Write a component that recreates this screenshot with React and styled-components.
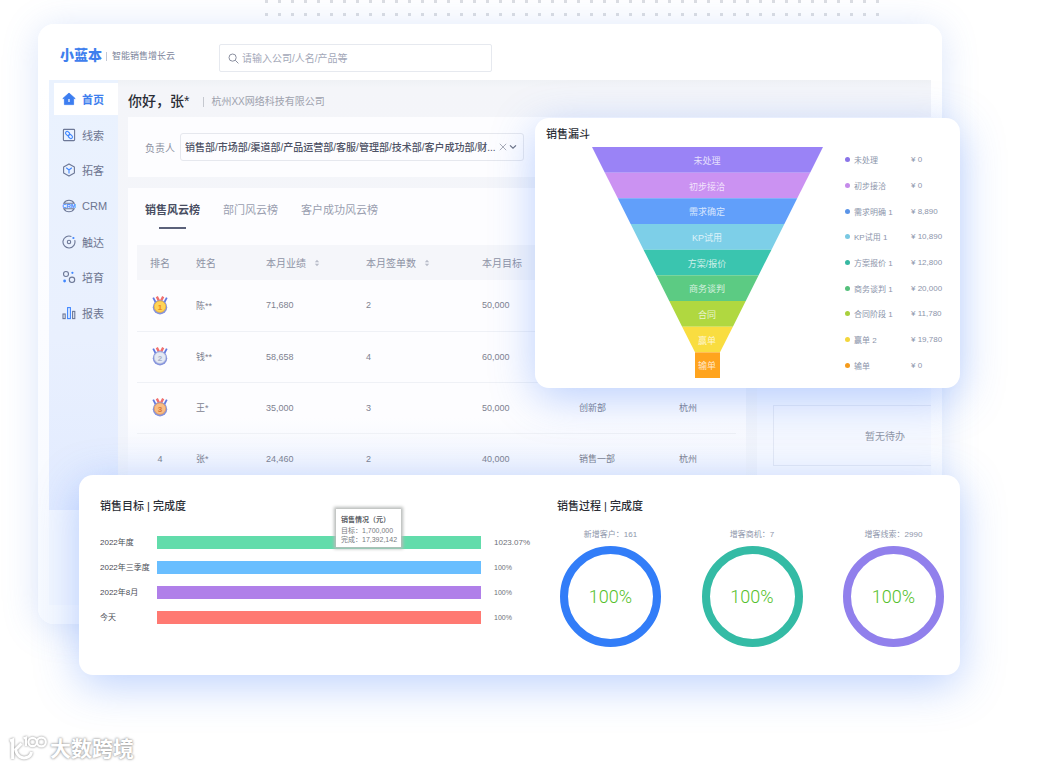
import React from 'react'
import styled, { createGlobalStyle } from 'styled-components'

const navItems = [
    { name: '首页', icon: 'home' },
    { name: '线索', icon: 'clue' },
    { name: '拓客', icon: 'expand' },
    { name: 'CRM', icon: 'crm' },
    { name: '触达', icon: 'reach' },
    { name: '培育', icon: 'nurture' },
    { name: '报表', icon: 'report' },
]

const rows = [
    { rank: 1, name: '陈**', amount: '71,680', orders: 2, target: '50,000', dept: '', city: '' },
    { rank: 2, name: '钱**', amount: '58,658', orders: 4, target: '60,000', dept: '', city: '' },
    { rank: 3, name: '王*', amount: '35,000', orders: 3, target: '50,000', dept: '创新部', city: '杭州' },
    { rank: 4, name: '张*', amount: '24,460', orders: 2, target: '40,000', dept: '销售一部', city: '杭州' },
]

const stages = [
    { label: '未处理', legend: '未处理', value: '¥ 0', color: '#9a83f6', dot: '#8a74e8' },
    { label: '初步接洽', legend: '初步接洽', value: '¥ 0', color: '#cb92f2', dot: '#c58bea' },
    { label: '需求确定', legend: '需求明确 1', value: '¥ 8,890', color: '#619ffa', dot: '#5a94e8' },
    { label: 'KP试用', legend: 'KP试用 1', value: '¥ 10,890', color: '#7dcfe8', dot: '#79c8e2' },
    { label: '方案/报价', legend: '方案报价 1', value: '¥ 12,800', color: '#3ac5af', dot: '#36b8a2' },
    { label: '商务谈判', legend: '商务谈判 1', value: '¥ 20,000', color: '#5ccb83', dot: '#55c07b' },
    { label: '合同', legend: '合同阶段 1', value: '¥ 11,780', color: '#b0d840', dot: '#a9d03c' },
    { label: '赢单', legend: '赢单 2', value: '¥ 19,780', color: '#f9dd40', dot: '#f3d63c' },
    { label: '输单', legend: '输单', value: '¥ 0', color: '#ffa41e', dot: '#f59b1c' },
]

const goals = [
    { label: '2022年度', percent: '1023.07%', color: '#62dcab', big: true },
    { label: '2022年三季度', percent: '100%', color: '#69beff' },
    { label: '2022年8月', percent: '100%', color: '#b07fe9' },
    { label: '今天', percent: '100%', color: '#ff7972' },
]

const rings = [
    { label: '新增客户：161', color: '#327df8' },
    { label: '增客商机：7', color: '#34bba5' },
    { label: '增客线索：2990', color: '#9180ec' },
]

const medals = {
    1: { face: '#ffd457', edge: '#f3b52f', text: '#f08a1c' },
    2: { face: '#e4e9f4', edge: '#c5cde0', text: '#a9b1c6' },
    3: { face: '#f9bd84', edge: '#e99c5d', text: '#d9793a' },
}

function NavIcon({ name }) {
    const grey = '#6d7897'
    const blue = '#3f86ff'
    return (
        <svg width="14" height="14" viewBox="0 0 14 14" fill="none" stroke={grey} strokeWidth="1.1" aria-hidden="true">
            {name === 'home' && (
                <>
                    <path d="M7 1 L13.2 6.6 H11.6 V12.6 H2.4 V6.6 H0.8 Z" fill="#3c7df0" stroke="#3c7df0" strokeWidth="0.8" strokeLinejoin="round" />
                    <path d="M7 7 V10" stroke="#fff" strokeWidth="1.2" />
                </>
            )}
            {name === 'clue' && (
                <>
                    <rect x="1.4" y="1.4" width="11.2" height="11.2" rx="0.8" />
                    <rect x="3.4" y="3.8" width="4.4" height="3.2" rx="1.5" transform="rotate(45 5.6 5.4)" stroke={blue} />
                    <rect x="6.2" y="7" width="4.4" height="3.2" rx="1.5" transform="rotate(45 8.4 8.6)" stroke={blue} />
                </>
            )}
            {name === 'expand' && (
                <>
                    <path d="M7 0.9 L12.4 4 V10 L7 13.1 L1.6 10 V4 Z" strokeLinejoin="round" />
                    <path d="M4.2 4.8 L7 7 L9.8 4.8 M7 7 V10.4" stroke={blue} />
                </>
            )}
            {name === 'crm' && (
                <>
                    <path d="M1.8 4.2 A6 6 0 0 1 12.2 4.2 Z M1.8 9.8 A6 6 0 0 0 12.2 9.8 Z" />
                    <text x="7" y="9" textAnchor="middle" fontSize="6" fontWeight="700" fill={blue} stroke="none">CRM</text>
                </>
            )}
            {name === 'reach' && (
                <>
                    <path d="M9.4 1.5 A6 6 0 1 0 12.7 5.2" />
                    <circle cx="7" cy="7" r="1.7" />
                    <circle cx="11.4" cy="3" r="1.1" fill={blue} stroke="none" />
                </>
            )}
            {name === 'nurture' && (
                <>
                    <circle cx="4" cy="4" r="2.5" />
                    <circle cx="10" cy="9.8" r="2.7" />
                    <circle cx="10.4" cy="2.8" r="1.1" fill={blue} stroke="none" />
                    <circle cx="2.6" cy="11" r="1.4" fill={blue} stroke="none" />
                </>
            )}
            {name === 'report' && (
                <>
                    <rect x="1" y="8" width="2.2" height="4.6" />
                    <rect x="5.6" y="1.6" width="2.8" height="11" stroke={blue} />
                    <rect x="10.6" y="5.4" width="2.2" height="7.2" />
                </>
            )}
        </svg>
    )
}

function Medal({ rank }) {
    const m = medals[rank]
    return (
        <svg width="16" height="19" viewBox="0 0 16 19" role="img" aria-label={`${rank}`}>
            <path d="M1.2 1.6 L4 7" stroke="#5f78e0" strokeWidth="1.8" />
            <path d="M14.8 1.6 L12 7" stroke="#5f78e0" strokeWidth="1.8" />
            <path d="M4.8 0.6 L7.4 5.6 M11.2 0.6 L8.6 5.6" stroke="#f0706e" strokeWidth="2.4" />
            <circle cx="8" cy="11.2" r="7.2" fill="#8593dc" />
            <circle cx="8" cy="10.6" r="5.7" fill={m.face} stroke={m.edge} strokeWidth="0.8" />
            <text x="8" y="13.6" textAnchor="middle" fontSize="8" fontWeight="700" fill={m.text}>{rank}</text>
        </svg>
    )
}

function SortIcon() {
    return (
        <svg width="6" height="8" viewBox="0 0 6 8" fill="#b9bdc9" aria-hidden="true">
            <path d="M3 0.8 L5.2 3.2 H0.8 Z M3 7.2 L5.2 4.8 H0.8 Z" />
        </svg>
    )
}

function Funnel() {
    const band = 231 / 9
    const edge = (i) => (Math.min(i, 8) * 103) / 8
    return (
        <svg width="231" height="231" viewBox="0 0 231 231">
            {stages.map((s, i) => {
                const top = edge(i)
                const bottom = edge(i + 1)
                const y = i * band
                return (
                    <g key={s.label}>
                        <polygon
                            points={`${top},${y} ${231 - top},${y} ${231 - bottom},${y + band} ${bottom},${y + band}`}
                            fill={s.color}
                        />
                        <text x="115" y={y + 17} textAnchor="middle" fontSize="9" fill="#fff" fillOpacity="0.75">{s.label}</text>
                    </g>
                )
            })}
        </svg>
    )
}

function App() {
    return (
        <Stage>
            <GlobalStyle />
            <Dots />
            <Window>
                <Header>
                    <Logo>小蓝本</Logo>
                    <Slogan>智能销售增长云</Slogan>
                    <Search>
                        <svg width="11" height="11" viewBox="0 0 11 11" fill="none" stroke="#8b90a0" aria-hidden="true">
                            <circle cx="4.6" cy="4.6" r="3.6" />
                            <path d="M7.3 7.3 L10.4 10.4" />
                        </svg>
                        <input type="search" aria-label="搜索" placeholder="请输入公司/人名/产品等" />
                    </Search>
                </Header>
                <Body>
                    <Sidebar>
                        {navItems.map((item, i) => (
                            <NavLink href="#" key={item.name} $active={i === 0}>
                                <NavIcon name={item.icon} />
                                {item.name}
                            </NavLink>
                        ))}
                    </Sidebar>
                    <Main>
                        <Greeting>
                            <h1>你好，张*</h1>
                            <p>杭州XX网络科技有限公司</p>
                        </Greeting>
                        <FilterPanel>
                            <label htmlFor="owner">负责人</label>
                            <SelectBox>
                                <select id="owner">
                                    <option>销售部/市场部/渠道部/产品运营部/客服/管理部/技术部/客户成功部/财...</option>
                                </select>
                                <button type="button" aria-label="清除">
                                    <svg width="8" height="8" viewBox="0 0 8 8" stroke="#a9adb8" aria-hidden="true">
                                        <path d="M0.8 0.8 L7.2 7.2 M7.2 0.8 L0.8 7.2" />
                                    </svg>
                                </button>
                                <svg width="8" height="6" viewBox="0 0 8 6" fill="none" stroke="#6b7183" strokeWidth="1.2" aria-hidden="true">
                                    <path d="M1 1.4 L4 4.2 L7 1.4" />
                                </svg>
                            </SelectBox>
                        </FilterPanel>
                        <Columns>
                            <RankPanel>
                                <Tabs>
                                    <Tab type="button" $active>销售风云榜</Tab>
                                    <Tab type="button">部门风云榜</Tab>
                                    <Tab type="button">客户成功风云榜</Tab>
                                </Tabs>
                                <RankTable>
                                    <colgroup>
                                        <col width="46" />
                                        <col width="70" />
                                        <col width="100" />
                                        <col width="116" />
                                        <col width="97" />
                                        <col width="100" />
                                        <col />
                                    </colgroup>
                                    <thead>
                                        <tr>
                                            <th>排名</th>
                                            <th>姓名</th>
                                            <th><Sort type="button">本月业绩<SortIcon /></Sort></th>
                                            <th><Sort type="button">本月签单数<SortIcon /></Sort></th>
                                            <th>本月目标</th>
                                            <td />
                                            <td />
                                        </tr>
                                    </thead>
                                    <tbody>
                                        {rows.map((r) => (
                                            <tr key={r.rank}>
                                                <td>{medals[r.rank] ? <Medal rank={r.rank} /> : r.rank}</td>
                                                <td>{r.name}</td>
                                                <td>{r.amount}</td>
                                                <td>{r.orders}</td>
                                                <td>{r.target}</td>
                                                <td>{r.dept}</td>
                                                <td>{r.city}</td>
                                            </tr>
                                        ))}
                                    </tbody>
                                </RankTable>
                            </RankPanel>
                            <TodoPanel>
                                <Todo>暂无待办</Todo>
                            </TodoPanel>
                        </Columns>
                    </Main>
                </Body>
            </Window>

            <FunnelCard>
                <CardTitle>销售漏斗</CardTitle>
                <FunnelBody>
                    <Funnel />
                    <Legend>
                        {stages.map((s) => (
                            <LegendItem key={s.label} $color={s.dot}>
                                <span>{s.legend}</span>
                                <b>{s.value}</b>
                            </LegendItem>
                        ))}
                    </Legend>
                </FunnelBody>
            </FunnelCard>

            <ReportCard>
                <Goals>
                    <CardTitle>销售目标 | 完成度</CardTitle>
                    <GoalList>
                        {goals.map((g) => (
                            <GoalRow key={g.label} $big={g.big}>
                                <span>{g.label}</span>
                                <Bar $color={g.color}>
                                    {g.big && (
                                        <Tooltip>
                                            <strong>销售情况（元）</strong>
                                            <p>目标：1,700,000</p>
                                            <p>完成：17,392,142</p>
                                        </Tooltip>
                                    )}
                                </Bar>
                                <em>{g.percent}</em>
                            </GoalRow>
                        ))}
                    </GoalList>
                </Goals>
                <Process>
                    <CardTitle>销售过程 | 完成度</CardTitle>
                    <Rings>
                        {rings.map((r) => (
                            <RingItem key={r.label}>
                                <p>{r.label}</p>
                                <Ring $color={r.color}>100%</Ring>
                            </RingItem>
                        ))}
                    </Rings>
                </Process>
            </ReportCard>

            <Watermark>
                <svg width="39" height="28" viewBox="0 0 39 28" fill="none" stroke="#fff" strokeWidth="3" aria-hidden="true">
                    <path d="M1 6 L3.6 5 V24" />
                    <path d="M12.5 8.5 L6.6 14.4 C7.6 21 12.6 24 17.6 22.5 C20.4 21.6 22 20 22.5 17" />
                    <path d="M14.5 3.4 L17 2.6 V11" strokeWidth="2.2" />
                    <circle cx="23.6" cy="7" r="4.2" strokeWidth="2.2" />
                    <circle cx="32.4" cy="7" r="4.4" strokeWidth="2.2" />
                </svg>
                大数跨境
            </Watermark>
        </Stage>
    )
}

export default App

const GlobalStyle = createGlobalStyle`
    *{
        box-sizing: border-box;
    }
    body{
        margin: 0;
        background: #fff;
        font-family: "Liberation Sans", "Noto Sans CJK SC", sans-serif;
    }
    h1, h2, p{
        margin: 0;
    }
    button, input, select{
        font: inherit;
        color: inherit;
        border: none;
        background: none;
        padding: 0;
        outline: none;
    }
    button{
        cursor: pointer;
    }
`

const Stage = styled.div`
    position: relative;
    overflow: hidden;
    padding-bottom: 4px;
`

const Dots = styled.div`
    height: 16px;
    margin: 0 160px 0 265px;
    background: conic-gradient(at 3px 3px, transparent 75%, #dcdee2 0) 0 0 / 13px 13px;
`

const Window = styled.div`
    margin: 8px 97px 0 38px;
    padding: 0 11px 19px;
    border-radius: 16px;
    background: linear-gradient(#fff 60px, #fbfcff 300px, #f7faff);
    box-shadow: 0 4px 36px rgba(80, 130, 230, 0.22);
`

const Header = styled.header`
    display: flex;
    align-items: center;
    height: 56px;
    padding: 8px 11px 0;
`

const Logo = styled.strong`
    font-size: 14px;
    font-weight: 900;
    line-height: 14px;
    padding-bottom: 2px;
    color: #3f80ee;
`

const Slogan = styled.span`
    margin-left: 4px;
    padding-left: 5px;
    border-left: 1px solid #c3c8d4;
    font-size: 9px;
    line-height: 9px;
    color: #7d859c;
`

const Search = styled.label`
    display: flex;
    align-items: center;
    gap: 3px;
    width: 273px;
    height: 28px;
    margin: 4px 0 0 44px;
    padding: 0 8px;
    border: 1px solid #e6e9ef;
    border-radius: 2px;
    font-size: 10px;
    input{
        flex: 1;
    }
    input::placeholder{
        color: #a3a8b8;
    }
`

const Body = styled.div`
    display: flex;
    align-items: flex-start;
    min-height: 525px;
    background: #f3f7ff;
`

const Sidebar = styled.nav`
    display: flex;
    flex-direction: column;
    justify-content: space-between;
    width: 69px;
    min-height: 430px;
    padding: 3px 0 181px 5px;
    background: linear-gradient(#eaf2fe, #e9f0fe 60%, #e2ebff);
`

const NavLink = styled.a`
    display: flex;
    align-items: center;
    gap: 6px;
    height: 32px;
    padding-left: 8px;
    font-size: 11px;
    font-weight: ${(p) => (p.$active ? 700 : 400)};
    color: ${(p) => (p.$active ? '#3f80ee' : '#6d7590')};
    background: ${(p) => (p.$active ? '#fff' : 'transparent')};
    text-decoration: none;
`

const Main = styled.main`
    flex: 1;
    align-self: stretch;
    display: flex;
    flex-direction: column;
    min-width: 0;
    padding-left: 10px;
    background: linear-gradient(#eff1f5, #f4f5f9 8px, #f4f6fb 60%, #e6edfc);
`

const Greeting = styled.div`
    display: flex;
    align-items: center;
    gap: 14px;
    height: 37px;
    padding-top: 7px;
    h1{
        font-size: 14px;
        font-weight: 500;
        line-height: 18px;
        padding-bottom: 2px;
        color: #2a2d36;
    }
    p{
        padding-left: 7px;
        border-left: 1px solid #c5c8cf;
        font-size: 10px;
        line-height: 10px;
        color: #9ea2ae;
    }
`

const FilterPanel = styled.section`
    display: flex;
    align-items: center;
    gap: 5px;
    height: 60px;
    padding-left: 17px;
    background: #fdfdff;
    font-size: 10px;
    color: #8d92a2;
`

const SelectBox = styled.div`
    display: flex;
    align-items: center;
    gap: 2px;
    width: 344px;
    height: 28px;
    padding: 0 6px 0 4px;
    border: 1px solid #e6e8ee;
    border-radius: 3px;
    color: #4d5265;
    select{
        flex: 1;
        min-width: 0;
        appearance: none;
        font-weight: 500;
    }
    button{
        display: flex;
    }
`

const Columns = styled.div`
    flex: 1;
    display: flex;
    gap: 11px;
    margin-top: 11px;
`

const RankPanel = styled.section`
    flex: 1;
    padding: 0 10px 0 9px;
    background: linear-gradient(#fdfdff 230px, #f0f4fe 285px);
`

const Tabs = styled.div`
    display: flex;
    gap: 23px;
    height: 57px;
    padding: 9px 0 0 8px;
`

const Tab = styled.button`
    position: relative;
    height: 23px;
    font-size: 11px;
    font-weight: ${(p) => (p.$active ? 700 : 400)};
    color: ${(p) => (p.$active ? '#484d62' : '#9a9fb0')};
    &::after{
        content: '';
        display: ${(p) => (p.$active ? 'block' : 'none')};
        position: absolute;
        left: 14px;
        right: 14px;
        bottom: -9px;
        height: 2px;
        background: #5b617a;
    }
`

const RankTable = styled.table`
    width: 100%;
    table-layout: fixed;
    border-collapse: collapse;
    font-size: 9px;
    color: #7e8290;
    th, td{
        padding: 0 0 0 13px;
        text-align: left;
        vertical-align: middle;
    }
    thead tr{
        height: 35px;
        background: #f5f6fa;
    }
    th{
        font-size: 10px;
        font-weight: 400;
        color: #8e93a5;
    }
    th:first-child, td:first-child{
        padding: 0;
        text-align: center;
    }
    tbody td{
        height: 51px;
        border-bottom: 1px solid #eff1f6;
    }
    td svg{
        display: block;
        margin: 0 auto;
    }
`

const Sort = styled.button`
    display: flex;
    align-items: center;
    gap: 8px;
`

const TodoPanel = styled.section`
    width: 174px;
    padding: 217px 0 0 16px;
    overflow: hidden;
    background: #f5f8ff;
`

const Todo = styled.div`
    display: flex;
    align-items: center;
    justify-content: center;
    width: 224px;
    height: 61px;
    border: 1px solid #e3e8f4;
    font-size: 10px;
    color: #9096a6;
`

const Card = styled.section`
    background: #fff;
    border-radius: 14px;
    box-shadow: 0 10px 44px rgba(60, 120, 250, 0.34);
`

const CardTitle = styled.h2`
    font-size: 11px;
    font-weight: 500;
    line-height: 16px;
    color: #2b2e36;
`

const FunnelCard = styled(Card)`
    position: absolute;
    top: 118px;
    left: 535px;
    right: 79px;
    padding: 8px 11px 10px;
`

const FunnelBody = styled.div`
    display: flex;
    gap: 22px;
    margin-top: 5px;
    padding-left: 46px;
`

const Legend = styled.ul`
    flex: 1;
    display: grid;
    grid-template-rows: repeat(9, 1fr);
    margin: 0;
    padding: 0;
    list-style: none;
`

const LegendItem = styled.li`
    display: grid;
    grid-template-columns: 9px 57px 1fr;
    align-items: center;
    font-size: 8px;
    color: #8c95ab;
    white-space: nowrap;
    &::before{
        content: '';
        width: 5px;
        height: 5px;
        border-radius: 50%;
        background: ${(p) => p.$color};
    }
    b{
        font-weight: 400;
    }
`

const ReportCard = styled(Card)`
    position: relative;
    display: flex;
    min-height: 200px;
    margin: -149px 79px 0;
    padding: 23px 16px 28px 21px;
`

const Goals = styled.div`
    flex: 1;
`

const GoalList = styled.div`
    display: grid;
    gap: 12px;
    margin-top: 22px;
`

const GoalRow = styled.div`
    display: grid;
    grid-template-columns: 57px 1fr 50px;
    align-items: center;
    height: 13px;
    font-size: 8px;
    line-height: 12px;
    color: #4a4d55;
    em{
        font-size: ${(p) => (p.$big ? 8 : 7)}px;
        font-style: normal;
        color: #6d7078;
    }
`

const Bar = styled.div`
    position: relative;
    height: 13px;
    margin-right: 13px;
    background: ${(p) => p.$color};
`

const Tooltip = styled.div`
    position: absolute;
    right: 80px;
    bottom: 2px;
    width: 65px;
    padding: 5px 0 3px 5px;
    background: #fff;
    box-shadow: 0 0 3px 2px #b9bcba;
    font-size: 7px;
    line-height: 9px;
    color: #777a80;
    white-space: nowrap;
    strong{
        display: block;
        line-height: 12px;
        color: #5a5d63;
    }
`

const Process = styled.div`
    width: 387px;
    margin-left: 13px;
`

const Rings = styled.div`
    display: flex;
    justify-content: space-between;
    margin-top: 15px;
    padding-left: 3px;
`

const RingItem = styled.div`
    display: flex;
    flex-direction: column;
    align-items: center;
    gap: 5px;
    width: 101px;
    p{
        font-size: 8px;
        line-height: 12px;
        color: #8e96ab;
    }
`

const Ring = styled.div`
    display: flex;
    align-items: center;
    justify-content: center;
    width: 101px;
    height: 101px;
    border: 8px solid ${(p) => p.$color};
    border-radius: 50%;
    font-family: Roboto, sans-serif;
    font-size: 18px;
    font-weight: 300;
    color: #55bf2b;
`

const Watermark = styled.div`
    display: flex;
    align-items: center;
    gap: 2px;
    margin: 58px 0 0 9px;
    font-size: 21px;
    font-weight: 700;
    line-height: 32px;
    color: #fff;
    text-shadow: 0 0 2px #999, 0 0 3px #aaa;
    svg{
        filter: drop-shadow(0 0 1px #888);
    }
`
